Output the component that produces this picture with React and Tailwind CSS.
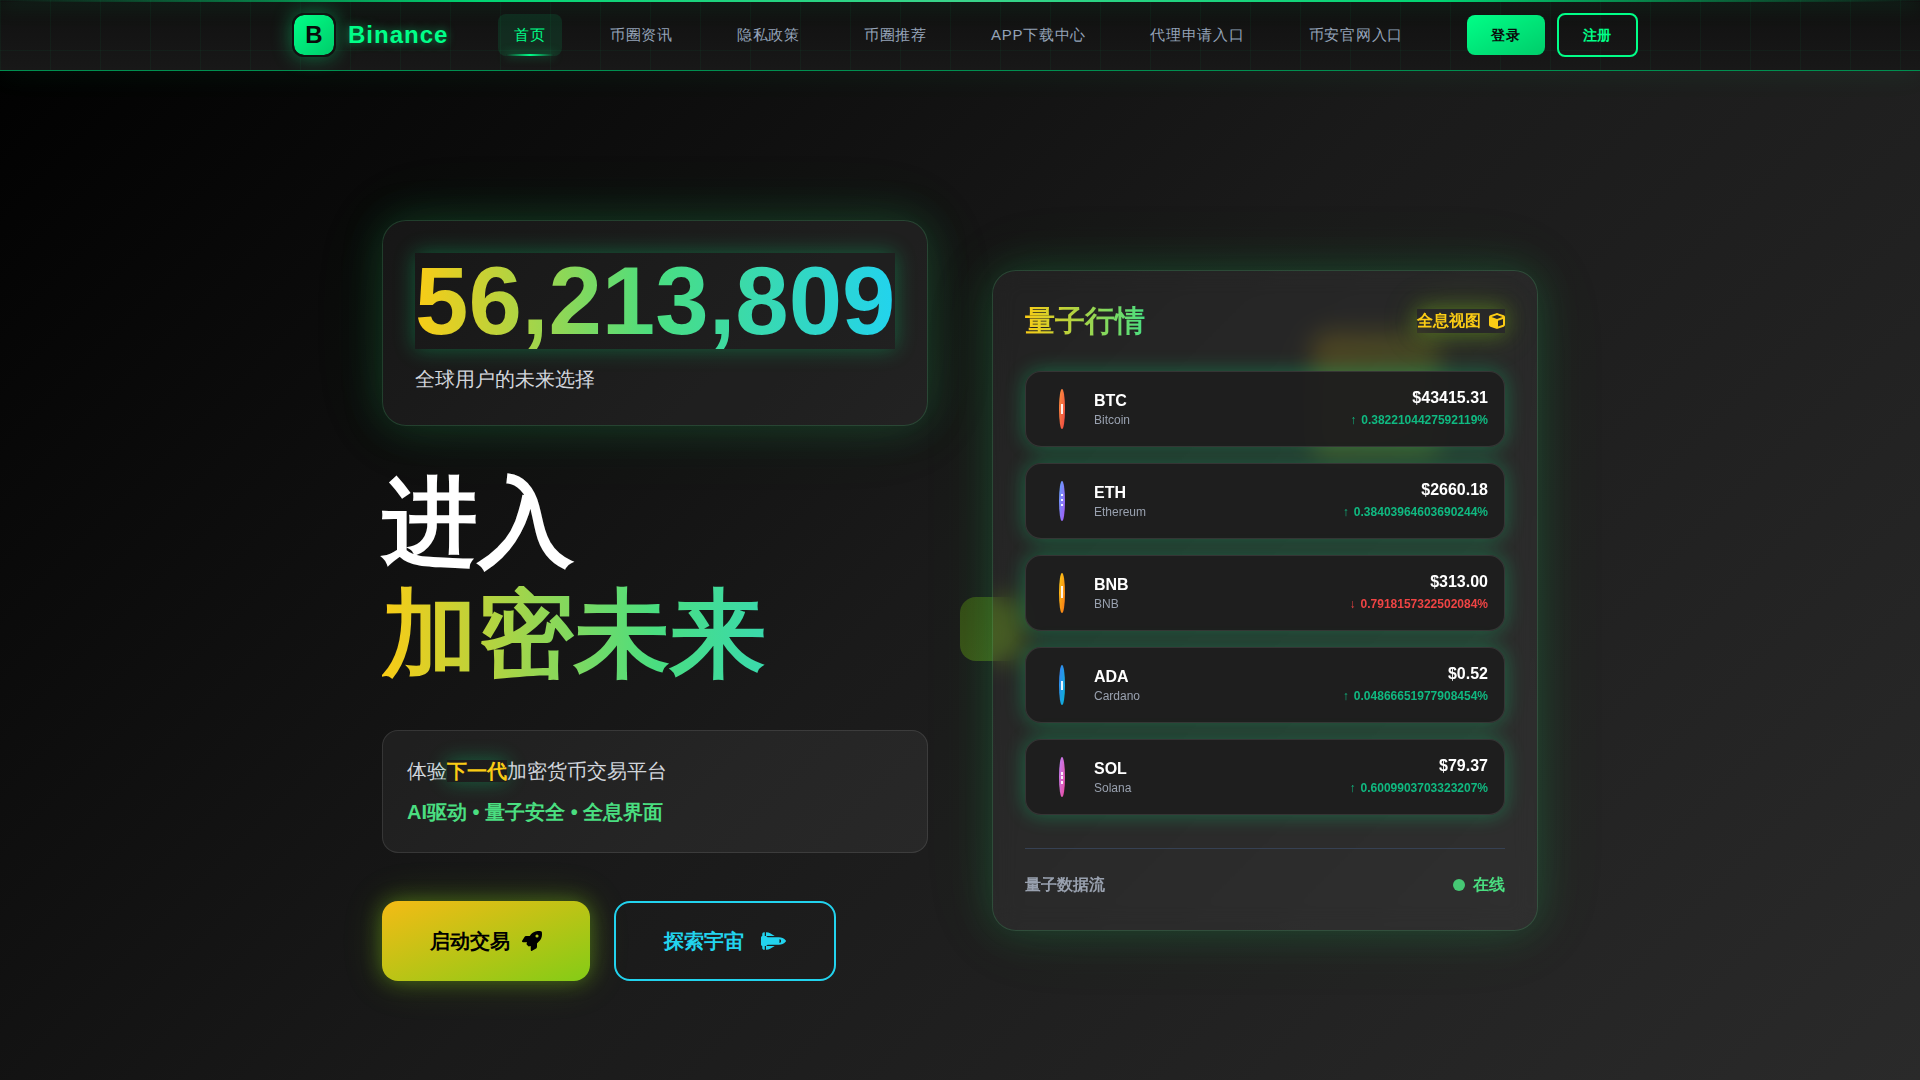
import { FaCube, FaRocket, FaShuttleSpace } from 'react-icons/fa6';

// ---------------------------------------------------------------------------
// Data
// ---------------------------------------------------------------------------
const NAV_ITEMS = [
  '首页',
  '币圈资讯',
  '隐私政策',
  '币圈推荐',
  'APP下载中心',
  '代理申请入口',
  '币安官网入口',
];

const COINS = [
  {
    symbol: 'BTC',
    name: 'Bitcoin',
    price: '$43415.31',
    change: '0.3822104427592119%',
    up: true,
    from: '#fb923c',
    to: '#ef4444',
    marks: [[15, 10]],
  },
  {
    symbol: 'ETH',
    name: 'Ethereum',
    price: '$2660.18',
    change: '0.38403964603690244%',
    up: true,
    from: '#60a5fa',
    to: '#a855f7',
    marks: [[13, 2], [18, 2], [23, 2]],
  },
  {
    symbol: 'BNB',
    name: 'BNB',
    price: '$313.00',
    change: '0.7918157322502084%',
    up: false,
    from: '#facc15',
    to: '#f97316',
    marks: [[13, 12]],
  },
  {
    symbol: 'ADA',
    name: 'Cardano',
    price: '$0.52',
    change: '0.04866651977908454%',
    up: true,
    from: '#3b82f6',
    to: '#06b6d4',
    marks: [[16, 9]],
  },
  {
    symbol: 'SOL',
    name: 'Solana',
    price: '$79.37',
    change: '0.6009903703323207%',
    up: true,
    from: '#c084fc',
    to: '#ec4899',
    marks: [[15, 3], [19, 3], [24, 3]],
  },
];

// ---------------------------------------------------------------------------
// Header
// ---------------------------------------------------------------------------
function Header() {
  return (
    <header
      className="relative z-10 border-b border-[#008f50] bg-[#151515]
                 bg-[linear-gradient(rgba(0,255,136,0.04)_1px,transparent_1px),linear-gradient(90deg,rgba(0,255,136,0.04)_1px,transparent_1px),linear-gradient(#101010,#181818)]
                 bg-[size:50px_50px,50px_50px,100%_100%] shadow-[0_4px_30px_rgba(0,255,136,0.06)]"
    >
      {/* Neon strip along the top edge */}
      <div
        className="absolute inset-x-0 top-0 h-[2px] bg-[linear-gradient(90deg,transparent,#00d472_25%,#3ad58b_50%,#00d472_75%,transparent)]
                   shadow-[0_0_20px_rgba(0,255,136,0.5)]"
      />

      <div className="mx-auto flex h-[70px] max-w-[1400px] items-center gap-12 px-8">
        <a href="#" className="flex shrink-0 items-center gap-3">
          <span
            className="flex size-11 items-center justify-center rounded-xl border-2 border-[#111111]
                       bg-linear-to-br/srgb from-[#00ff88] to-[#00cc6a] bg-clip-padding text-2xl font-bold text-[#0a0a0a]
                       shadow-[0_0_20px_rgba(0,255,136,0.4)]"
          >
            B
          </span>
          <span className="pr-[2px] text-2xl font-bold tracking-[1px] text-[#00ff88] [text-shadow:0_0_10px_rgba(0,255,136,0.5)]">
            Binance
          </span>
        </a>

        <nav className="flex shrink-0 gap-8">
          {NAV_ITEMS.map((label, i) => (
            <a
              key={label}
              href="#"
              className={`relative flex h-[42px] items-center rounded-lg px-4 text-[15px] tracking-wider ${
                i === 0 ? 'bg-[#00ff88]/10 text-[#00ff88]' : 'text-[#94a3b8]'
              }`}
            >
              {label}
              {i === 0 && (
                <span
                  className="absolute inset-x-2 bottom-0 h-[2px] bg-linear-to-r/srgb from-transparent via-[#00ff88] to-transparent
                             shadow-[0_0_10px_rgba(0,255,136,0.5)]"
                />
              )}
            </a>
          ))}
        </nav>

        <div className="flex shrink-0 items-center gap-3">
          <button
            type="button"
            className="h-10 rounded-lg bg-linear-to-br/srgb from-[#00ff88] to-[#00cc6a] px-6 text-sm font-bold tracking-wider text-[#0a0a0a]"
          >
            登录
          </button>
          <button
            type="button"
            className="h-11 rounded-lg border-2 border-[#00ff88] px-6 text-sm font-bold tracking-wider text-[#00ff88]"
          >
            注册
          </button>
        </div>
      </div>
    </header>
  );
}

// ---------------------------------------------------------------------------
// Hero
// ---------------------------------------------------------------------------
function Hero() {
  return (
    <section>
      <div
        className="rounded-3xl border border-[#4ade80]/20 bg-white/5 p-8
                   shadow-[0_0_40px_rgba(34,197,94,0.22),0_0_80px_rgba(34,197,94,0.08)]"
      >
        <div className="shadow-[0_0_20px_rgba(0,255,136,0.3)]">
          <p className="bg-linear-to-r/srgb from-[#facc15] via-[#4ade80] to-[#22d3ee] bg-clip-text text-8xl leading-none font-bold text-transparent">
            56,213,809
          </p>
        </div>
        <p className="mt-4 text-xl text-gray-300">全球用户的未来选择</p>
      </div>

      <h1 className="mt-12 text-8xl leading-none font-bold">
        <span className="mb-4 block leading-none text-white">进入</span>
        <span className="block bg-linear-to-r/srgb from-[#facc15] via-[#4ade80] to-[#22d3ee] bg-clip-text leading-none text-transparent">
          加密未来
        </span>
      </h1>

      <div className="mt-12 rounded-2xl border border-white/10 bg-white/5 p-6 text-xl leading-relaxed">
        <p className="text-gray-300">
          体验
          <span className="bg-black/10 font-bold text-[#facc15] shadow-[0_0_20px_rgba(0,255,136,0.3)]">下一代</span>
          加密货币交易平台
        </p>
        <p className="mt-2 font-bold text-[#4ade80]">AI驱动 • 量子安全 • 全息界面</p>
      </div>

      <div className="mt-12 flex gap-6">
        <button
          type="button"
          className="flex h-20 items-center gap-3 rounded-2xl bg-linear-to-br/srgb from-[#f4bb15] to-[#84cc16] px-12
                     text-xl font-bold text-black shadow-[0_0_20px_rgba(132,204,22,0.4),0_0_40px_rgba(132,204,22,0.2)]"
        >
          启动交易
          <FaRocket aria-hidden="true" />
        </button>
        <button
          type="button"
          className="flex h-20 items-center gap-[17px] rounded-2xl border-2 border-[#22d3ee] px-12 text-xl font-bold text-[#22d3ee]"
        >
          探索宇宙
          <FaShuttleSpace className="h-5 w-[25px]" aria-hidden="true" />
        </button>
      </div>
    </section>
  );
}

// ---------------------------------------------------------------------------
// Market panel
// ---------------------------------------------------------------------------

/** Coin seen almost edge-on */
function CoinIcon({ coin }) {
  const id = `coin-${coin.symbol}`;
  return (
    <svg width="40" height="40" viewBox="0 0 40 40" className="shrink-0" aria-hidden="true">
      <defs>
        <linearGradient id={id} x1="0" y1="0" x2="1" y2="1">
          <stop offset="0" stopColor={coin.from} />
          <stop offset="1" stopColor={coin.to} />
        </linearGradient>
      </defs>
      <ellipse cx="20" cy="20" rx="3" ry="20" fill={`url(#${id})`} />
      {coin.marks.map(([y, h]) => (
        <rect key={y} x="19" y={y} width="2" height={h} fill="#fff" opacity="0.9" />
      ))}
    </svg>
  );
}

function CoinRow({ coin }) {
  return (
    <li
      className="flex items-center justify-between rounded-2xl border border-white/10 bg-[#1f1f1f]/95 p-4
                 shadow-[0_0_20px_rgba(0,255,136,0.3)]"
    >
      <div className="flex items-center gap-3">
        <CoinIcon coin={coin} />
        <div>
          <p className="leading-[22px] font-bold text-white">{coin.symbol}</p>
          <p className="text-xs text-gray-400">{coin.name}</p>
        </div>
      </div>
      <div className="text-right">
        <p className="leading-5 font-bold text-white">{coin.price}</p>
        <p
          className={`mt-[2px] flex justify-end gap-[5px] text-xs leading-5 font-bold ${
            coin.up ? 'text-[#10b981]' : 'text-[#ef4444]'
          }`}
        >
          <span>{coin.up ? '↑' : '↓'}</span>
          <span>{coin.change}</span>
        </p>
      </div>
    </li>
  );
}

function MarketPanel() {
  return (
    <section className="relative">
      {/* Floating shapes behind the glass */}
      <div className="absolute top-[62px] right-[98px] size-32 rounded-2xl bg-linear-to-br/srgb from-[#eab308] to-[#84cc16] opacity-20" />
      <div className="absolute top-[327px] -left-8 size-16 rounded-2xl bg-linear-to-br/srgb from-[#65a30d] to-[#84cc16] opacity-35" />

      <div
        className="relative rounded-3xl border border-[#4ade80]/20 bg-white/5 p-8 pb-[33px] backdrop-blur-md
                   shadow-[0_0_40px_rgba(34,197,94,0.22),0_0_80px_rgba(34,197,94,0.08)]"
      >
        <div className="flex items-center justify-between">
          <h2 className="bg-linear-to-r/srgb from-[#facc15] to-[#4ade80] bg-clip-text text-3xl font-bold text-transparent">
            量子行情
          </h2>
          <a
            href="#"
            className="flex items-center gap-2 font-bold text-[#facc15]
                       shadow-[0_0_20px_rgba(132,204,22,0.4),0_0_40px_rgba(132,204,22,0.2)]"
          >
            全息视图
            <FaCube aria-hidden="true" />
          </a>
        </div>

        <ul className="mt-8 flex flex-col gap-4">
          {COINS.map((coin) => (
            <CoinRow key={coin.symbol} coin={coin} />
          ))}
        </ul>

        <div className="mt-[33px] flex items-center justify-between border-t border-gray-700 pt-6 font-bold">
          <span className="text-gray-400">量子数据流</span>
          <span className="flex items-center gap-2 text-[#4ade80]">
            <span className="size-3 rounded-full bg-[#46c874]" />
            在线
          </span>
        </div>
      </div>
    </section>
  );
}

export default function App() {
  return (
    <div
      className="min-h-screen overflow-hidden bg-linear-135/srgb from-black via-[#1a1a1a] to-[#2a2a2a]
                 font-['Liberation_Sans',sans-serif]"
    >
      <Header />
      <main className="mx-auto grid max-w-[1156px] grid-cols-2 items-center gap-16 pt-[149px] pb-24">
        <Hero />
        <MarketPanel />
      </main>
    </div>
  );
}
